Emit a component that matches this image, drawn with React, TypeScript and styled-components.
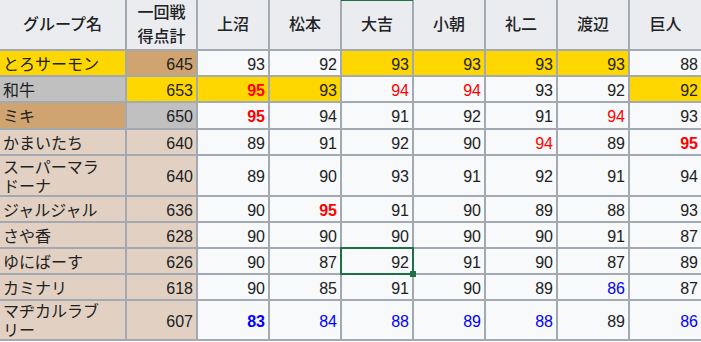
import React from "react";
import styled, { createGlobalStyle } from "styled-components";

const Global = createGlobalStyle`
  html, body { margin: 0; padding: 0; background: #ffffff; }
  body { font-family: "Liberation Sans", "Noto Sans CJK JP", sans-serif; }
`;

const GOLD = "#ffd700";
const SILVER = "#c0c0c0";
const BRONZE = "#cfa470";
const BEIGE = "#e2d1c3";
const GREEN = "#1e7145";

const Grid = styled.div`
  display: grid;
  grid-template-columns: 125px 69px repeat(6, 70px) 71px;
  grid-template-rows: 49px 24px 24px 25px 24px 39px 24px 24px 24px 24px 38px;
  gap: 2px;
  padding-bottom: 2px;
  width: 701px;
  background: #a2a9b1;
  font-family: "Liberation Sans", "Noto Sans CJK JP", sans-serif;
  font-size: 16px;
  color: #202122;
`;

const Head = styled.div<{ $active?: boolean }>`
  position: relative;
  display: flex;
  align-items: center;
  justify-content: center;
  text-align: center;
  background: #eaecf0;
  font-weight: 500;
  line-height: 24px;
  padding-top: 1px;
  ${(p) =>
    p.$active &&
    `&::before {
      content: "";
      position: absolute;
      top: 0;
      left: -1px;
      right: -1px;
      height: 1px;
      background: ${GREEN};
    }`}
`;

const Cell = styled.div<{
  $bg?: string;
  $align?: "left" | "right";
  $color?: string;
  $bold?: boolean;
  $selected?: boolean;
}>`
  position: relative;
  display: flex;
  align-items: center;
  justify-content: ${(p) => (p.$align === "left" ? "flex-start" : "flex-end")};
  padding: 2px 3px 0 3px;
  background: ${(p) => p.$bg ?? "#f8f9fa"};
  color: ${(p) => p.$color ?? "#202122"};
  font-weight: ${(p) => (p.$bold ? "bold" : "normal")};
  line-height: 19px;
  white-space: nowrap;
  ${(p) =>
    p.$selected &&
    `&::after {
      content: "";
      position: absolute;
      top: -2px;
      left: -2px;
      right: -2px;
      bottom: -2px;
      border: 2px solid ${GREEN};
      pointer-events: none;
    }
    &::before {
      content: "";
      position: absolute;
      right: -4px;
      bottom: -4px;
      width: 6px;
      height: 6px;
      background: ${GREEN};
      z-index: 1;
    }`}
`;

type Score = { v: number; bg?: string; color?: string; bold?: boolean; selected?: boolean };
type Row = { name: React.ReactNode; nameBg: string; total: number; totalBg: string; scores: Score[] };

const RED = "#ff0000";
const BLUE = "#0000ff";

const n = (v: number): Score => ({ v });
const g = (v: number, color?: string, bold?: boolean): Score => ({ v, bg: GOLD, color, bold });
const red = (v: number): Score => ({ v, color: RED });
const redB = (v: number): Score => ({ v, color: RED, bold: true });
const blue = (v: number): Score => ({ v, color: BLUE });
const blueB = (v: number): Score => ({ v, color: BLUE, bold: true });

const judges = ["上沼", "松本", "大吉", "小朝", "礼二", "渡辺", "巨人"];

const rows: Row[] = [
  { name: "とろサーモン", nameBg: GOLD, total: 645, totalBg: BRONZE, scores: [n(93), n(92), g(93), g(93), g(93), g(93), n(88)] },
  { name: "和牛", nameBg: SILVER, total: 653, totalBg: GOLD, scores: [g(95, RED, true), g(93), red(94), red(94), n(93), n(92), g(92)] },
  { name: "ミキ", nameBg: BRONZE, total: 650, totalBg: SILVER, scores: [redB(95), n(94), n(91), n(92), n(91), red(94), n(93)] },
  { name: "かまいたち", nameBg: BEIGE, total: 640, totalBg: BEIGE, scores: [n(89), n(91), n(92), n(90), red(94), n(89), redB(95)] },
  { name: <>スーパーマラ<br />ドーナ</>, nameBg: BEIGE, total: 640, totalBg: BEIGE, scores: [n(89), n(90), n(93), n(91), n(92), n(91), n(94)] },
  { name: "ジャルジャル", nameBg: BEIGE, total: 636, totalBg: BEIGE, scores: [n(90), redB(95), n(91), n(90), n(89), n(88), n(93)] },
  { name: "さや香", nameBg: BEIGE, total: 628, totalBg: BEIGE, scores: [n(90), n(90), n(90), n(90), n(90), n(91), n(87)] },
  { name: "ゆにばーす", nameBg: BEIGE, total: 626, totalBg: BEIGE, scores: [n(90), n(87), { v: 92, selected: true }, n(91), n(90), n(87), n(89)] },
  { name: "カミナリ", nameBg: BEIGE, total: 618, totalBg: BEIGE, scores: [n(90), n(85), n(91), n(90), n(89), blue(86), n(87)] },
  { name: <>マヂカルラブ<br />リー</>, nameBg: BEIGE, total: 607, totalBg: BEIGE, scores: [blueB(83), blue(84), blue(88), blue(89), blue(88), n(89), blue(86)] },
];

export default function App() {
  return (
    <>
      <Global />
      <Grid>
        <Head>グループ名</Head>
        <Head>一回戦<br />得点計</Head>
        {judges.map((j) => (
          <Head key={j} $active={j === "大吉"}>{j}</Head>
        ))}
        {rows.map((r, i) => (
          <React.Fragment key={i}>
            <Cell $align="left" $bg={r.nameBg}>
              <span>{r.name}</span>
            </Cell>
            <Cell $bg={r.totalBg}>{r.total}</Cell>
            {r.scores.map((s, k) => (
              <Cell key={k} $bg={s.bg} $color={s.color} $bold={s.bold} $selected={s.selected}>
                {s.v}
              </Cell>
            ))}
          </React.Fragment>
        ))}
      </Grid>
    </>
  );
}
